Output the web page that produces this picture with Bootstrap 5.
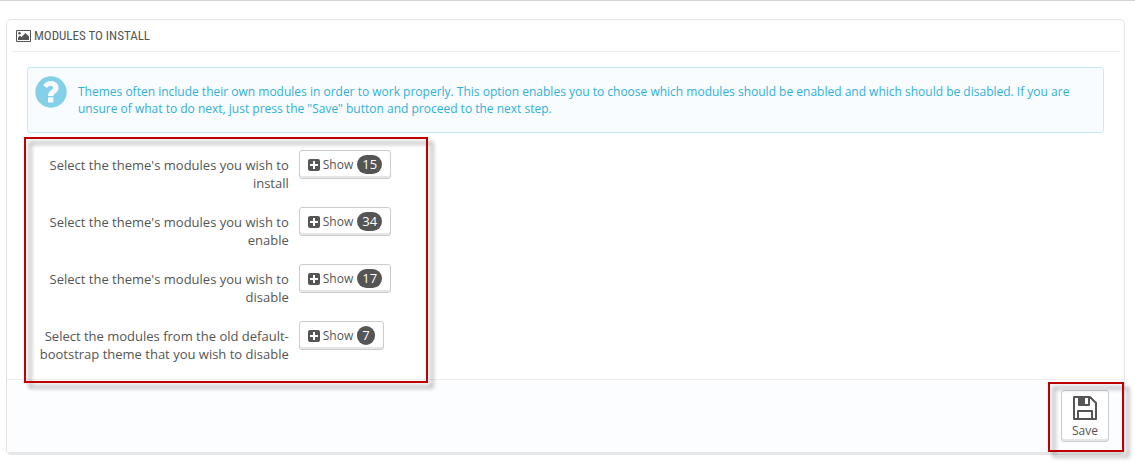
<!DOCTYPE html>
<html lang="en">
<head>
<meta charset="utf-8">
<meta name="viewport" content="width=device-width, initial-scale=1">
<title>Modules to install</title>
<link href="https://cdn.jsdelivr.net/npm/bootstrap@5.3.0/dist/css/bootstrap.min.css" rel="stylesheet">
<style>
body { font-family: "Open Sans", sans-serif; font-size: 13px; line-height: 18px; color: #555; background: #fff; border-top: 1px solid #d3d3d3; }
.page-wrap { padding: 18px 10px 14px 6px; }
.panel-box { border: 1px solid #e6e6e6; border-bottom: 3px solid #e4e6e7; border-radius: 5px; position: relative; }
.panel-title { font-family: "Roboto Condensed", "Liberation Sans Narrow", sans-serif; font-size: 13px; line-height: 31px; font-weight: 400; margin: 0 4px 15px; padding: 0 5px; gap: 3px; border-bottom: 1px solid #eee; text-transform: uppercase; }
.info-box { background: #f8fcff; border: 1px solid #c5e9f3; border-radius: 3px; color: #31b0d5; font-size: 12px; line-height: 17px; margin: 0 20px 17px; padding: 8px 8px 7px 7px; min-height: 66px; gap: 11px; }
.info-box p { padding-top: 7px; }
.form-area { padding: 0 15px; }
.form-area .row { --bs-gutter-x: 10px; margin: 0 0 15px; }
.form-area .row:last-child { margin-bottom: 16px; }
.field-label { padding-top: 6px; }
.plain-btn { --bs-btn-font-size: 12px; --bs-btn-line-height: 18px; --bs-btn-padding-x: 8px; --bs-btn-padding-y: 0; --bs-btn-color: #555; --bs-btn-bg: #fff; --bs-btn-border-color: #ccc; --bs-btn-border-radius: 3px; --bs-btn-hover-bg: #f4f4f4; --bs-btn-hover-border-color: #bbb; box-shadow: inset 0 -2px 0 #e6e6e6; }
.show-btn { height: 29px; gap: 3px; }
.count-pill { background: #555; color: #fff; font-size: 13px; font-weight: 400; line-height: 19px; height: 19px; padding: 0 5px; margin-left: 1px; border-radius: 10px; }
.panel-foot { background: #fcfdff; border-top: 1px solid #eee; padding: 10px 15px; }
.save-btn { width: 48px; height: 52px; line-height: 14px; padding: 5px 0 0; }
.callout-frame { position: absolute; border: 2px solid #c00000; filter: drop-shadow(5px 5px 2px rgba(0,0,0,.4)); pointer-events: none; }
.frame-fields { left: 17px; top: 117px; width: 404px; height: 246px; }
.frame-save { right: 0; bottom: 0; width: 76px; height: 70px; }
</style>
</head>
<body>
<svg class="d-none" aria-hidden="true">
  <symbol id="plus" viewBox="0 0 12 12"><path fill="currentColor" fill-rule="evenodd" d="M2 0h8a2 2 0 0 1 2 2v8a2 2 0 0 1-2 2H2a2 2 0 0 1-2-2V2a2 2 0 0 1 2-2zM5 2v3H2v2h3v3h2V7h3V5H7V2z"/></symbol>
</svg>
<main class="page-wrap">
  <form class="panel-box" onsubmit="return false">
    <h1 class="panel-title d-flex align-items-center">
      <svg width="15" height="12" viewBox="0 0 15 12" aria-hidden="true"><path fill="#555" fill-rule="evenodd" d="M1 0h13a1 1 0 0 1 1 1v10a1 1 0 0 1-1 1H1a1 1 0 0 1-1-1V1a1 1 0 0 1 1-1zM1 1v10h13V1zM2 10V7.500l2-2L5.500 7l4-4L13 6.500V10z"/><circle cx="3.500" cy="3.300" r="1.300" fill="#555"/></svg>
      Modules to install
    </h1>
    <div class="info-box d-flex" role="note">
      <svg class="flex-shrink-0" width="32" height="32" viewBox="0 0 32 32" aria-hidden="true"><circle cx="16" cy="16" r="15.700" fill="#83d0e8"/><path fill="#f8fcff" d="M13 20h5.400c0-2.600 5.200-3.200 5.200-8.200C23.600 7.500 19.800 5 16 5c-3.500 0-6 1.600-7.700 4.300l3.600 2.800c1-1.400 2-2.300 3.600-2.300 1.400 0 2.600.7 2.600 2 0 2.300-5.100 3-5.100 8.200zM13 21.300h5.300v5.200H13z"/></svg>
      <p class="mb-0">Themes often include their own modules in order to work properly. This option enables you to choose which modules should be enabled and which should be disabled. If you are unsure of what to do next, just press the "Save" button and proceed to the next step.</p>
    </div>
    <div class="form-area">
      <div class="row">
        <label class="col-3 field-label text-end" for="install">Select the theme's modules you wish to install</label>
        <div class="col-9"><button id="install" type="button" class="btn plain-btn show-btn d-inline-flex align-items-center"><svg width="12" height="12" aria-hidden="true"><use href="#plus"/></svg>Show <span class="count-pill">15</span></button></div>
      </div>
      <div class="row">
        <label class="col-3 field-label text-end" for="enable">Select the theme's modules you wish to enable</label>
        <div class="col-9"><button id="enable" type="button" class="btn plain-btn show-btn d-inline-flex align-items-center"><svg width="12" height="12" aria-hidden="true"><use href="#plus"/></svg>Show <span class="count-pill">34</span></button></div>
      </div>
      <div class="row">
        <label class="col-3 field-label text-end" for="disable">Select the theme's modules you wish to disable</label>
        <div class="col-9"><button id="disable" type="button" class="btn plain-btn show-btn d-inline-flex align-items-center"><svg width="12" height="12" aria-hidden="true"><use href="#plus"/></svg>Show <span class="count-pill">17</span></button></div>
      </div>
      <div class="row">
        <label class="col-3 field-label text-end" for="old">Select the modules from the old default-bootstrap theme that you wish to disable</label>
        <div class="col-9"><button id="old" type="button" class="btn plain-btn show-btn d-inline-flex align-items-center"><svg width="12" height="12" aria-hidden="true"><use href="#plus"/></svg>Show <span class="count-pill">7</span></button></div>
      </div>
    </div>
    <div class="panel-foot d-flex justify-content-end">
      <button type="submit" class="btn plain-btn save-btn d-flex flex-column align-items-center">
        <svg class="mb-1" width="24" height="24" viewBox="0 0 24 24" aria-hidden="true"><path fill="none" stroke="#555" stroke-width="2" stroke-linejoin="round" d="M1 1h16l6 6v16H1zM5 23v-8h14v8M6 1v8h10V1"/><path fill="#555" d="M6 1h6v8H6z"/></svg>
        Save
      </button>
    </div>
    <div class="callout-frame frame-fields"></div>
    <div class="callout-frame frame-save"></div>
  </form>
</main>
<script src="https://cdn.jsdelivr.net/npm/bootstrap@5.3.0/dist/js/bootstrap.bundle.min.js"></script>
</body>
</html>
